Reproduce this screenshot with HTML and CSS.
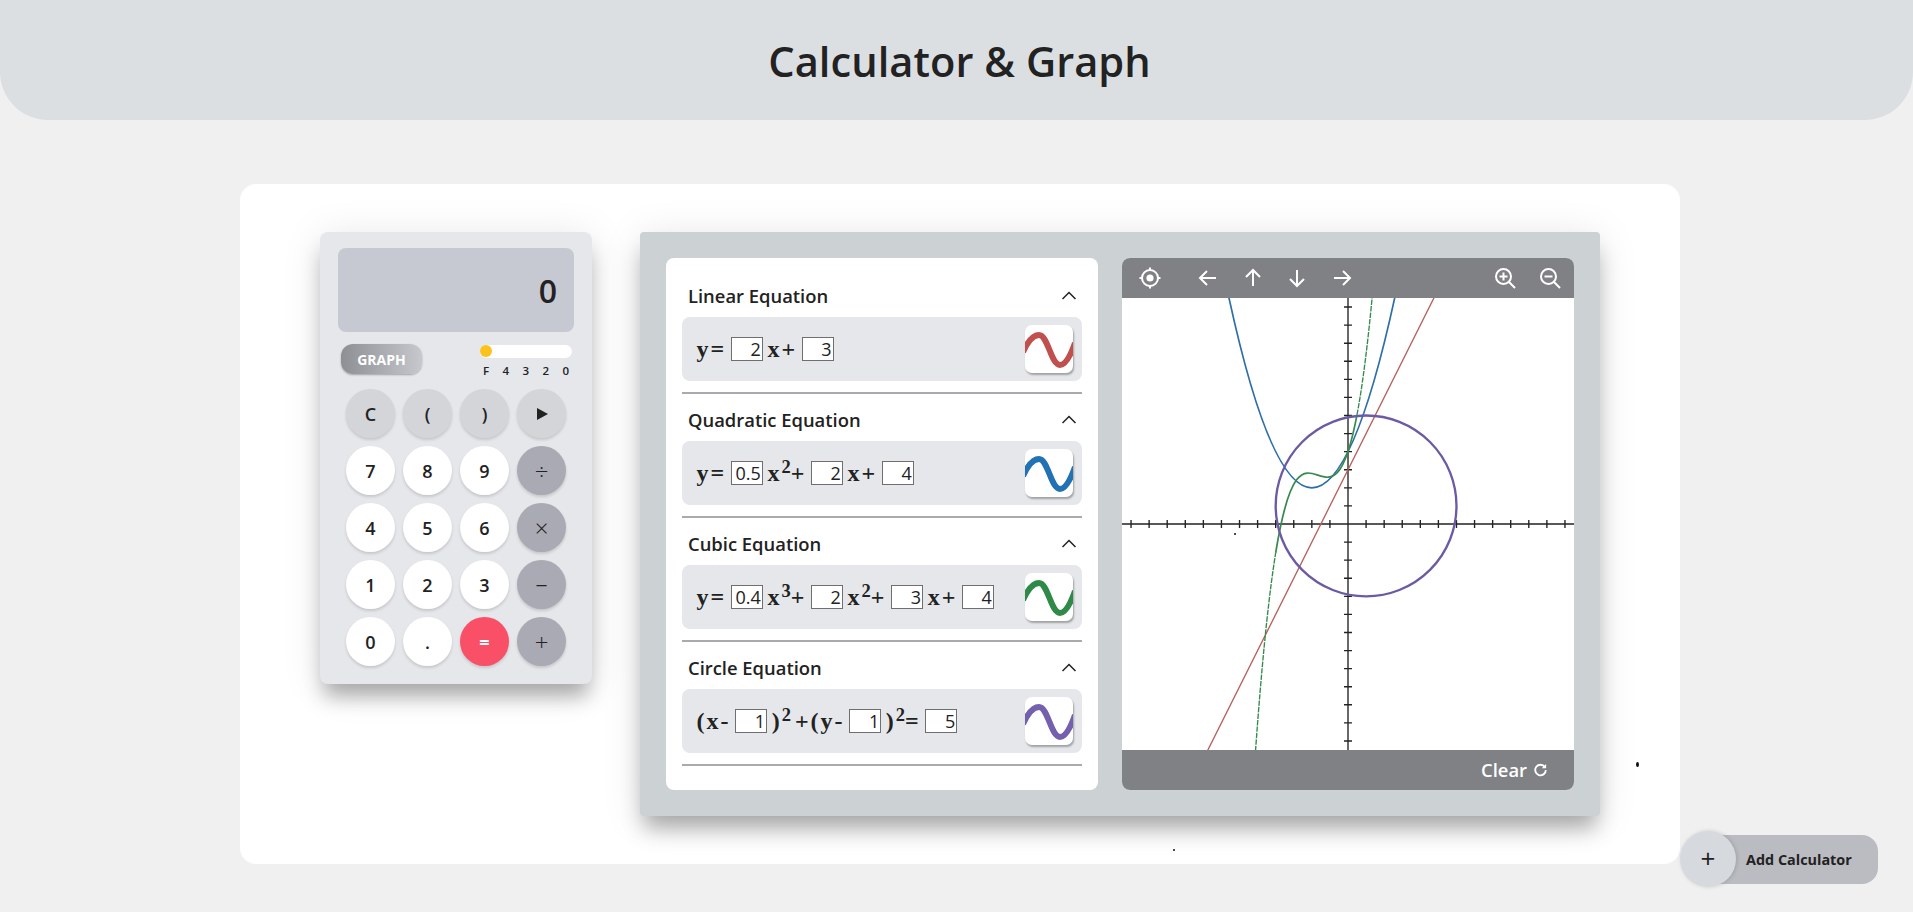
FILE: index.html
```html
<!DOCTYPE html>
<html lang="en">
<head>
<meta charset="utf-8">
<title>Calculator &amp; Graph</title>
<link rel="stylesheet" href="styles.css">
</head>
<body>
<header class="top"><h1>Calculator &amp; Graph</h1></header>
<main class="card">
  <section class="calc">
    <div class="display">0</div>
    <div class="controls">
      <button class="graph-btn">GRAPH</button>
      <div class="slider">
        <div class="track"><span class="thumb"></span></div>
        <div class="labels"><span>F</span><span>4</span><span>3</span><span>2</span><span>0</span></div>
      </div>
    </div>
    <div class="keys">
      <button class="key fn">C</button><button class="key fn">(</button><button class="key fn">)</button>
      <button class="key fn"><svg width="14" height="14" viewBox="0 0 14 14"><path d="M2 1l11 6-11 6z" fill="#222"/></svg></button>
      <button class="key">7</button><button class="key">8</button><button class="key">9</button><button class="key op">÷</button>
      <button class="key">4</button><button class="key">5</button><button class="key">6</button><button class="key op">×</button>
      <button class="key">1</button><button class="key">2</button><button class="key">3</button><button class="key op minus">–</button>
      <button class="key">0</button><button class="key">.</button><button class="key eq">=</button><button class="key op">+</button>
    </div>
  </section>

  <section class="panel">
    <div class="list">
      <div class="eq-section">
        <div class="eq-head"><span>Linear Equation</span><svg class="chev" width="16" height="9" viewBox="0 0 16 9"><path d="M1.5 8L8 1.5 14.5 8"/></svg></div>
        <div class="eq-row">
          <div class="formula"><span class="t">y=</span><input class="num" value="2"><span class="t">x+</span><input class="num" value="3"></div>
          <div class="thumb-tile"><svg width="48" height="48" viewBox="0 0 48 48"><path class="wave wave-red" d="M-2 27C3 16 8 10 14 10C23 10 26 40 35 40C40 40 45 32 50 18"/></svg></div>
        </div>
      </div>
      <div class="eq-section">
        <div class="eq-head"><span>Quadratic Equation</span><svg class="chev" width="16" height="9" viewBox="0 0 16 9"><path d="M1.5 8L8 1.5 14.5 8"/></svg></div>
        <div class="eq-row">
          <div class="formula"><span class="t">y=</span><input class="num" value="0.5"><span class="t">x<sup>2</sup>+</span><input class="num" value="2"><span class="t">x+</span><input class="num" value="4"></div>
          <div class="thumb-tile"><svg width="48" height="48" viewBox="0 0 48 48"><path class="wave wave-blue" d="M-2 27C3 16 8 10 14 10C23 10 26 40 35 40C40 40 45 32 50 18"/></svg></div>
        </div>
      </div>
      <div class="eq-section">
        <div class="eq-head"><span>Cubic Equation</span><svg class="chev" width="16" height="9" viewBox="0 0 16 9"><path d="M1.5 8L8 1.5 14.5 8"/></svg></div>
        <div class="eq-row">
          <div class="formula"><span class="t">y=</span><input class="num" value="0.4"><span class="t">x<sup>3</sup>+</span><input class="num" value="2"><span class="t">x<sup>2</sup>+</span><input class="num" value="3"><span class="t">x+</span><input class="num" value="4"></div>
          <div class="thumb-tile"><svg width="48" height="48" viewBox="0 0 48 48"><path class="wave wave-green" d="M-2 27C3 16 8 10 14 10C23 10 26 40 35 40C40 40 45 32 50 18"/></svg></div>
        </div>
      </div>
      <div class="eq-section">
        <div class="eq-head"><span>Circle Equation</span><svg class="chev" width="16" height="9" viewBox="0 0 16 9"><path d="M1.5 8L8 1.5 14.5 8"/></svg></div>
        <div class="eq-row">
          <div class="formula"><span class="t">(x-</span><input class="num" value="1"><span class="t">)<sup>2</sup><span class="sp"></span>+(y-</span><input class="num" value="1"><span class="t">)<sup>2</sup>=</span><input class="num" value="5"></div>
          <div class="thumb-tile"><svg width="48" height="48" viewBox="0 0 48 48"><path class="wave wave-purple" d="M-2 27C3 16 8 10 14 10C23 10 26 40 35 40C40 40 45 32 50 18"/></svg></div>
        </div>
      </div>
    </div>

    <div class="graph">
      <div class="toolbar">
        <div class="tools">
          <svg class="ico ico-target" viewBox="0 0 24 24"><circle cx="12" cy="12" r="8"/><circle class="solid" cx="12" cy="12" r="3.6"/><path d="M12 1.5V4M12 20v2.5M1.5 12H4M20 12h2.5"/></svg>
          <div class="arrows">
            <svg class="ico" viewBox="0 0 24 24"><path d="M20 12H4M11 5l-7 7 7 7"/></svg>
            <svg class="ico" viewBox="0 0 24 24"><path d="M12 20V4M5 11l7-7 7 7"/></svg>
            <svg class="ico" viewBox="0 0 24 24"><path d="M12 4v16M5 13l7 7 7-7"/></svg>
            <svg class="ico" viewBox="0 0 24 24"><path d="M4 12h16M13 5l7 7-7 7"/></svg>
          </div>
        </div>
        <div class="zooms">
          <svg class="ico" viewBox="0 0 24 24"><circle cx="10.5" cy="10.5" r="7.5"/><path d="M16 16l6 6M10.5 6.5v8M6.5 10.5h8"/></svg>
          <svg class="ico" viewBox="0 0 24 24"><circle cx="10.5" cy="10.5" r="7.5"/><path d="M16 16l6 6M6.5 10.5h8"/></svg>
        </div>
      </div>
      <div class="plot">
        <svg class="plot-svg" width="452" height="452" viewBox="-12.5 -12.5 25 25">
          <g class="axes">
            <path d="M-12.5 0H12.5M0 -12.5V12.5"/>
            <path d="M-12 -.22V.22M-11 -.22V.22M-10 -.22V.22M-9 -.22V.22M-8 -.22V.22M-7 -.22V.22M-6 -.22V.22M-5 -.22V.22M-4 -.22V.22M-3 -.22V.22M-2 -.22V.22M-1 -.22V.22M1 -.22V.22M2 -.22V.22M3 -.22V.22M4 -.22V.22M5 -.22V.22M6 -.22V.22M7 -.22V.22M8 -.22V.22M9 -.22V.22M10 -.22V.22M11 -.22V.22M12 -.22V.22"/>
            <path d="M-.22 -12H.22M-.22 -11H.22M-.22 -10H.22M-.22 -9H.22M-.22 -8H.22M-.22 -7H.22M-.22 -6H.22M-.22 -5H.22M-.22 -4H.22M-.22 -3H.22M-.22 -2H.22M-.22 -1H.22M-.22 1H.22M-.22 2H.22M-.22 3H.22M-.22 4H.22M-.22 5H.22M-.22 6H.22M-.22 7H.22M-.22 8H.22M-.22 9H.22M-.22 10H.22M-.22 11H.22M-.22 12H.22"/>
          </g>
          <g class="curves" transform="scale(1 -1)">
            <path class="c-line" d="M-8 -13L5 13"/>
            <path class="c-para" d="M-7 14.5Q-2 -10.5 3 14.5"/>
            <path class="c-cubic c-thin" d="M-6 -28.4C-5.3333 -13.6 -4.6667 -5.7333 -4 -1.6"/>
            <path class="c-cubic" d="M-4 -1.6C-2.5 7.7 -1 -1.9 .5 6.05"/>
            <path class="c-cubic c-thin" d="M.5 6.05C1.3333 10.4667 2.1667 20.3 3 41.8"/>
            <circle class="c-circle" cx="1" cy="1" r="5"/>
          </g>
        </svg>
        <span class="speck speck-plot"></span>
      </div>
      <div class="footbar">
        <span class="clear">Clear</span>
        <svg class="ico-clear" viewBox="0 0 24 24"><path d="M19 8A8.5 8.5 0 1 0 20.5 13"/><path class="solid" d="M21 3v7h-7z"/></svg>
      </div>
    </div>
  </section>
  <span class="speck speck-a"></span>
  <span class="speck speck-b"></span>
</main>
<button class="add"><span class="add-circle">+</span><span class="add-label">Add Calculator</span></button>
</body>
</html>
```

FILE: styles.css
```css
* { box-sizing: border-box; }
html, body { margin: 0; height: 100%; }
body {
  background: #f0f0f0;
  font-family: "Open Sans", "Liberation Sans", sans-serif;
  color: #222;
  overflow: hidden;
  position: relative;
}
button { font-family: inherit; border: 0; padding: 0; cursor: pointer; }

.top {
  height: 120px;
  padding-left: 6px;
  background: #dcdfe2;
  border-radius: 0 0 48px 48px;
  display: flex;
  align-items: center;
  justify-content: center;
}
.top h1 { margin: 2px 0 0; font-size: 41.6px; font-weight: 600; letter-spacing: .05px; color: #222; }

.card {
  position: relative;
  width: 1440px;
  height: 680px;
  margin: 64px 0 0 240px;
  padding: 48px 80px;
  background: #fff;
  border-radius: 16px;
  display: flex;
  align-items: flex-start;
  gap: 48px;
}

/* calculator */
.calc {
  width: 272px;
  height: 452px;
  flex: none;
  padding: 16px 18px 0;
  background: #e5e7ea;
  border-radius: 8px;
  box-shadow: 0 16px 20px -4px rgba(0,0,0,.3), 0 4px 40px rgba(0,0,0,.1);
}
.display {
  height: 84px;
  background: #c6c9d2;
  border-radius: 8px;
  font-size: 32px;
  font-weight: 600;
  line-height: 86px;
  text-align: right;
  padding-right: 17px;
}
.controls { display: flex; justify-content: space-between; margin: 12px 2px 0 3px; height: 45px; }
.graph-btn {
  width: 81px;
  height: 30px;
  border-radius: 12px;
  background: linear-gradient(90deg, #8e8f94, #c6c8cd);
  color: #fff;
  font-size: 14px;
  font-weight: 700;
  box-shadow: 0 1px 2px rgba(0,0,0,.3);
}
.slider { width: 92px; padding-top: 1px; }
.track { position: relative; height: 13px; background: #fff; border-radius: 7px; }
.thumb { position: absolute; left: 0; top: 0; width: 12px; height: 12px; border-radius: 50%; background: #fcc21b; }
.labels { display: flex; justify-content: space-between; padding: 5px 3px 0 3px; font-size: 11.5px; font-weight: 600; line-height: 16px; }

.keys { display: grid; grid-template-columns: repeat(4, 49px); grid-auto-rows: 49px; gap: 8px; margin: 0 0 0 8px; }
.key {
  border-radius: 50%;
  background: #fff;
  color: #222;
  font-size: 18px;
  font-weight: 600;
  box-shadow: 0 2px 3px rgba(0,0,0,.14);
  display: flex;
  align-items: center;
  justify-content: center;
}
.key.fn { background: #d3d5d9; }
.key.op { background: #a9aab3; font-weight: 300; font-size: 24px; }
.key.minus { padding-bottom: 5px; }
.key.eq { background: #f95068; color: #fff; font-weight: 700; }

/* panel */
.panel {
  width: 960px;
  height: 584px;
  flex: none;
  padding: 26px;
  background: #ccd1d4;
  border-radius: 4px;
  display: flex;
  gap: 24px;
  box-shadow: 0 16px 20px -4px rgba(0,0,0,.3), 0 4px 40px rgba(0,0,0,.1);
}
.list {
  width: 432px;
  height: 532px;
  padding: 12px 16px 0;
  background: #fff;
  border-radius: 8px;
}
.eq-section { height: 124px; border-bottom: 2px solid #a9aaae; padding-bottom: 11px; }
.eq-head {
  height: 47px;
  padding: 4px 5px 0 6px;
  display: flex;
  align-items: center;
  justify-content: space-between;
  font-size: 18.4px;
  font-weight: 600;
}
.chev { fill: none; stroke: #222; stroke-width: 1.5; }
.eq-row {
  height: 64px;
  background: #e5e7ea;
  border-radius: 8px;
  padding: 0 9px 0 14.5px;
  display: flex;
  align-items: center;
  justify-content: space-between;
}
.formula { display: flex; align-items: center; gap: 4.6px; }
.t { font-family: "Liberation Serif", serif; font-weight: 700; font-size: 24px; line-height: 24px; letter-spacing: 2px; white-space: pre; color: #222; }
.t sup { font-size: 18.5px; line-height: 0; letter-spacing: 0; vertical-align: 8px; font-family: "Liberation Serif", serif; }
.sp { display: inline-block; width: 4px; }
.num {
  width: 32px;
  height: 24px;
  padding: 0 1px 0 0;
  border: 1px solid #6f6f6f;
  background: #fff;
  font-family: "Open Sans", sans-serif;
  font-size: 18px;
  color: #222;
  text-align: right;
  border-radius: 0;
  outline: 0;
}
.thumb-tile {
  width: 48px;
  height: 48px;
  background: #fff;
  border-radius: 7px;
  overflow: hidden;
  box-shadow: 1px 2px 2px rgba(0,0,0,.3);
}
.thumb-tile svg { display: block; }
.wave { fill: none; stroke-width: 6; }
.wave-red { stroke: #c0504d; }
.wave-blue { stroke: #2271b3; }
.wave-green { stroke: #2f8a48; }
.wave-purple { stroke: #7560ae; }

/* graph */
.graph {
  width: 452px;
  height: 532px;
  border-radius: 8px;
  overflow: hidden;
  display: flex;
  flex-direction: column;
  background: #fff;
}
.toolbar {
  height: 40px;
  background: #808185;
  padding: 0 12px 1px 16px;
  display: flex;
  align-items: center;
  justify-content: space-between;
}
.tools, .arrows, .zooms { display: flex; align-items: center; }
.tools { gap: 34px; }
.arrows { gap: 20.7px; }
.zooms { gap: 21px; }
.ico { width: 24px; height: 24px; fill: none; stroke: #fff; stroke-width: 2; display: block; }
.ico .solid { fill: #fff; stroke: none; }
.plot { position: relative; height: 452px; flex: none; }
.plot-svg { display: block; }
.axes path { fill: none; stroke: #222; stroke-width: .075; }
.curves path, .curves circle { fill: none; }
.c-line { stroke: #b5615a; stroke-width: .075; }
.c-para { stroke: #2e6fa8; stroke-width: .095; }
.c-cubic { stroke: #358a4c; stroke-width: .095; }
.curves .c-thin { stroke-width: .075; stroke-dasharray: .3 .06; }
.c-circle { stroke: #6c5ba4; stroke-width: .13; }
.footbar {
  height: 40px;
  background: #808185;
  padding: 0 26px 1px 0;
  display: flex;
  align-items: center;
  justify-content: flex-end;
  gap: 6px;
  color: #fff;
}
.clear { font-size: 18.4px; font-weight: 600; }
.ico-clear { width: 15px; height: 15px; fill: none; stroke: #fff; stroke-width: 3; }
.ico-clear .solid { fill: #fff; stroke: none; }

/* stray pixels in the reference */
.speck { position: absolute; background: #111; border-radius: 50%; }
.speck-plot { left: 112px; top: 235px; width: 2px; height: 2px; }
.speck-a { left: 1396px; top: 578px; width: 3px; height: 5px; }
.speck-b { left: 933px; top: 665px; width: 2px; height: 2px; }

/* floating button */
.add {
  position: absolute;
  left: 1680px;
  top: 831px;
  width: 198px;
  height: 56px;
  background: none;
  display: flex;
  align-items: center;
}
.add-label {
  position: absolute;
  left: 28px;
  top: 4px;
  width: 170px;
  height: 49px;
  padding-left: 38px;
  background: #bbbcc1;
  border-radius: 0 16px 16px 0;
  font-size: 14.4px;
  font-weight: 700;
  color: #222;
  line-height: 49px;
  text-align: left;
}
.add-circle {
  position: relative;
  z-index: 1;
  width: 56px;
  height: 56px;
  border-radius: 50%;
  background: #d6d9dd;
  box-shadow: 1px 0 4px rgba(0,0,0,.15);
  font-size: 26px;
  font-weight: 400;
  line-height: 54px;
  text-align: center;
  color: #222;
}
```
